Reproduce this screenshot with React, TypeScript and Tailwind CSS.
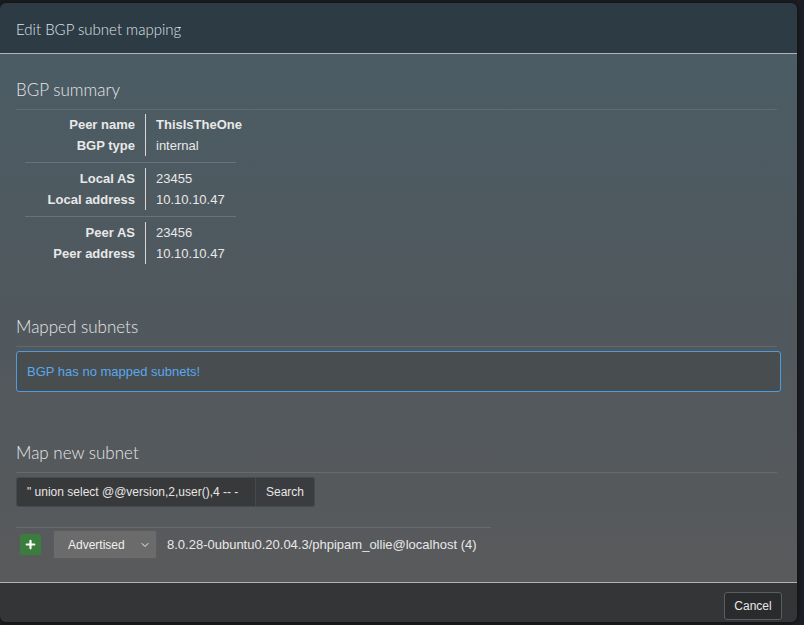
import { ChevronDown, Plus } from 'lucide-react';

const sans = { fontFamily: '"Liberation Sans", Arial, sans-serif' };

interface Row {
  label: string;
  value: string;
  bold?: boolean;
}

const groups: Row[][] = [
  [
    { label: 'Peer name', value: 'ThisIsTheOne', bold: true },
    { label: 'BGP type', value: 'internal' },
  ],
  [
    { label: 'Local AS', value: '23455' },
    { label: 'Local address', value: '10.10.10.47' },
  ],
  [
    { label: 'Peer AS', value: '23456' },
    { label: 'Peer address', value: '10.10.10.47' },
  ],
];

function SectionTitle({ children }: { children: string }) {
  return (
    <div className="mr-[4px] border-b border-white/10 pb-[9px]">
      <h4 className="font-['Lato',sans-serif] text-[17px] font-light leading-[20px] text-[#e4e6e8]">
        {children}
      </h4>
    </div>
  );
}

export default function App() {
  return (
    <div className="h-[625px] w-[804px] overflow-hidden bg-[#1c1f23] pt-[3px]" style={sans}>
      <div className="flex h-[619px] w-[797px] flex-col overflow-hidden rounded-[6px] shadow-[0_0_6px_rgba(0,0,0,0.6)]">
        {/* Header */}
        <div className="flex h-[51px] shrink-0 items-center border-b border-[#b0b4b7] bg-[#2d3b44] px-[16px] pt-[3px]">
          <span className="font-['Lato',sans-serif] text-[15px] font-light text-[#dfe3e6]">
            Edit BGP subnet mapping
          </span>
        </div>

        {/* Body */}
        <div className="flex-1 bg-gradient-to-b from-[#4b5c64] via-[#50585d] to-[#595a5c] px-[16px] pt-[26px]">
          <SectionTitle>BGP summary</SectionTitle>

          <div className="ml-[9px] mt-[2px] w-[211px] text-[13px] text-[#e8e8e8]">
            {groups.map((g, gi) => (
              <div key={gi} className={gi < groups.length - 1 ? 'mb-[3px] border-b border-white/15 pb-[4px]' : ''}>
                <div className="flex py-[2px]">
                  <div className="flex w-[120px] shrink-0 flex-col items-end pr-[10px] font-bold">
                    {g.map((r) => (
                      <div key={r.label} className="h-[21px] whitespace-nowrap leading-[21px]">{r.label}</div>
                    ))}
                  </div>
                  <div className="flex flex-col border-l border-[#d8d8d8] pl-[10px]">
                    {g.map((r) => (
                      <div key={r.label} className={`h-[21px] whitespace-nowrap leading-[21px] ${r.bold ? 'font-bold' : ''}`}>
                        {r.value}
                      </div>
                    ))}
                  </div>
                </div>
              </div>
            ))}
          </div>

          <div className="mt-[51px]">
            <SectionTitle>Mapped subnets</SectionTitle>
          </div>
          <div className="mt-[4px] flex h-[41px] items-center rounded-[3px] border border-[#4e9be0] bg-[#45484b]/70 px-[10px] text-[13px] text-[#5aa8ee]">
            BGP has no mapped subnets!
          </div>

          <div className="mt-[51px]">
            <SectionTitle>Map new subnet</SectionTitle>
          </div>
          <div className="mt-[4px] flex h-[30px] w-[300px]">
            <div className="flex w-[240px] shrink-0 items-center rounded-l-[3px] border border-[#444a50] bg-[#38393b] px-[10px] text-[12px] whitespace-nowrap text-[#e6e6e6]">
              " union select @@version,2,user(),4 -- -
            </div>
            <div className="flex w-[59px] shrink-0 items-center justify-center rounded-r-[3px] border border-l-0 border-[#454a4f] bg-[#3a3c3f] text-[12px] text-[#e6e6e6]">
              Search
            </div>
          </div>

          <div className="mt-[20px] w-[475px] border-t border-white/10 pt-[2px]">
            <div className="flex items-center">
              <div className="ml-[4px] flex h-[21px] w-[21px] items-center justify-center rounded-[2px] bg-[#3a7d3f]">
                <Plus className="h-[13px] w-[13px] text-white" strokeWidth={4} />
              </div>
              <div className="ml-[12px] flex h-[29px] w-[104px] items-center justify-between rounded-[2px] border border-[#5a5c5e] bg-[#6b6b6b] pl-[14px] pr-[5px] text-[12px] text-[#f0f0f0]">
                Advertised
                <ChevronDown className="h-[12px] w-[12px]" strokeWidth={2} />
              </div>
              <span className="ml-[10px] whitespace-nowrap text-[13px] text-[#e8e8e8]">
                8.0.28-0ubuntu0.20.04.3/phpipam_ollie@localhost (4)
              </span>
            </div>
          </div>
        </div>

        {/* Footer */}
        <div className="flex h-[40px] shrink-0 items-start justify-end border-t border-[#b0b4b7] bg-[#343537] pr-[15px] pt-[9px]">
          <div className="flex h-[28px] w-[58px] items-center justify-center rounded-[3px] border border-[#5a5d61] bg-[#2a2b2d] text-[12px] text-[#e8e8e8]">
            Cancel
          </div>
        </div>
      </div>
    </div>
  );
}
